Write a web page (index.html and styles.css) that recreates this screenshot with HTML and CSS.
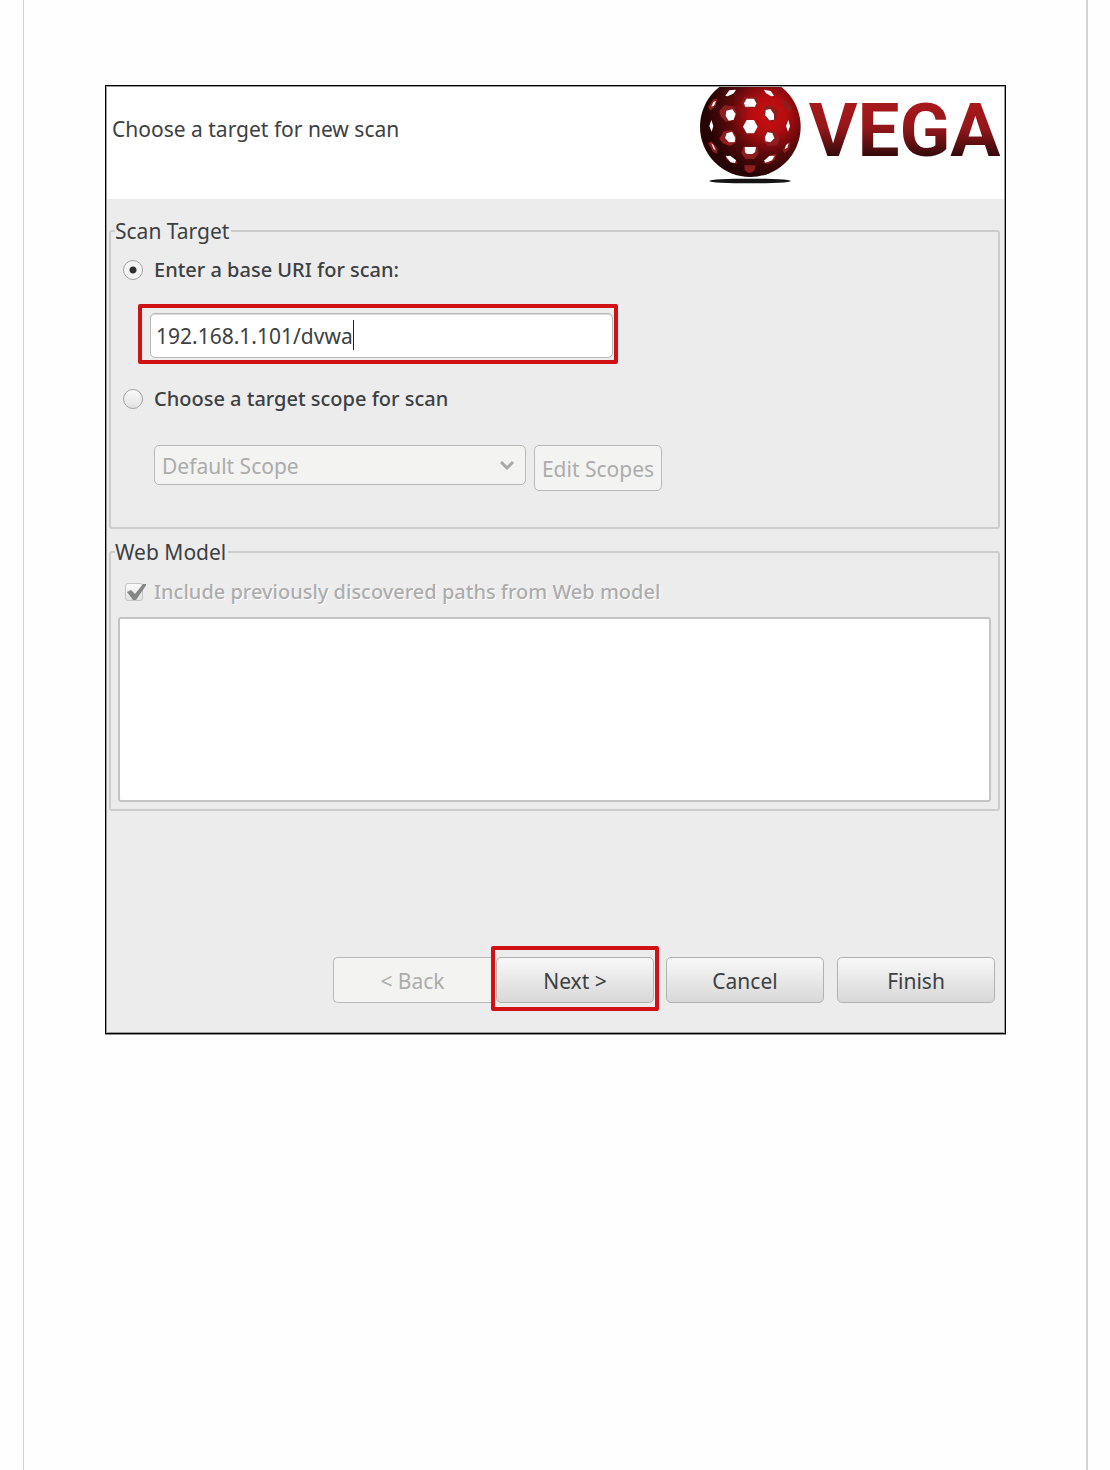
FILE: index.html
```html
<!DOCTYPE html>
<html lang="en">
<head>
<meta charset="utf-8">
<title>Vega – New scan</title>
<link rel="stylesheet" href="styles.css">
</head>
<body>
<main class="page">
  <form class="dialog">
    <header class="dialog-header">
      <h1 class="dialog-title">Choose a target for new scan</h1>
      <svg class="logo" viewBox="24 21 912 291" role="img" aria-label="Vega">
        <defs>
          <radialGradient id="ball" gradientUnits="userSpaceOnUse" cx="235" cy="105" r="185">
            <stop offset="0" stop-color="#cc0d10"/>
            <stop offset=".3" stop-color="#b30d10"/>
            <stop offset=".65" stop-color="#57090a"/>
            <stop offset="1" stop-color="#260304"/>
          </radialGradient>
          <linearGradient id="word" gradientUnits="userSpaceOnUse" x1="0" y1="57" x2="0" y2="233">
            <stop offset="0" stop-color="#ad191c"/>
            <stop offset=".5" stop-color="#921619"/>
            <stop offset="1" stop-color="#2f090b"/>
          </linearGradient>
        </defs>
        <ellipse cx="180" cy="303" rx="122" ry="7" fill="#151515"/>
        <circle cx="181" cy="140" r="151" fill="url(#ball)"/>
        <g fill="#8e1d1f">
          <path d="M163 50l36 0 6 20-8 14-34 0-8-14z"/>
          <path d="M88 93l16-17 26 3 10 16-8 26-24 4-16-16z"/>
          <path d="M222 80l20-6 20 18 2 22-14 12-22-6-8-22z"/>
          <path d="M88 176l14-23 24-3 12 18 0 20-18 10-22-8z"/>
          <path d="M222 168l10-18 24 6 14 18-10 22-26 2-12-12z"/>
          <path d="M160 200l42 0 4 20-12 17-28 0-12-17z"/>
          <path d="M163 256l34 0-3 15-10 7-10 0-10-7z"/>
          <path d="M108 225l30 14 4 12-18-2-16-12z"/>
          <path d="M220 248l18-22 22-4-6 18-20 12z"/>
          <path d="M54 82l16-24 12-2-4 20-16 16z"/>
          <path d="M276 60l14 2 16 24-4 8-18-10z"/>
          <path d="M54 190l10-6 16 18 2 20-12-6z"/>
          <path d="M278 210l14-22 10-2-4 20-14 14z"/>
        </g>
        <g fill="#fff">
          <path d="M170 120l22 0 11 20-11 20-22 0-11-20z"/>
          <path d="M170 56l22 0 7 14-4 10-29 0-4-10z"/>
          <path d="M109 92l18-4 10 14-6 17-15 3-9-14z"/>
          <path d="M227 90l14-3 11 16 0 16-14 2-12-15z"/>
          <path d="M110 160l16-5 10 19-2 12-17 1-12-13z"/>
          <path d="M232 157l15 2 6 16-12 12-14-3-2-13z"/>
          <path d="M164 201l34 0-3 16-8 5-16 0-6-5z"/>
          <path d="M106 47l12-16 20-2-8 12-18 8z"/>
          <path d="M222 29l20 4 10 14-8 2-16-9z"/>
          <path d="M107 229l14-2 17 14-3 8-13-2z"/>
          <path d="M222 242l16-14 16-1-8 14-19 7z"/>
          <path d="M64 120l6 18-5 17-7-17z"/>
          <path d="M295 120l5 18-6 17-6-17z"/>
          <path d="M64 80l6-14 8-3-6 14z"/>
          <path d="M64 190l6 5 7 16-6-4z"/>
          <path d="M284 207l5-13 7-4-4 13z"/>
        </g>
        <text class="logo-word" x="356" y="228" fill="url(#word)">VEGA</text>
      </svg>
    </header>

    <div class="dialog-body">
      <fieldset class="group group-target">
        <legend>Scan Target</legend>
        <label class="option"><input class="radio" type="radio" name="target" checked>Enter a base URI for scan:</label>
        <div class="highlight highlight-uri">
          <input class="uri" type="text" value="192.168.1.101/dvwa" aria-label="Base URI">
          <span class="caret"></span>
        </div>
        <label class="option"><input class="radio" type="radio" name="target">Choose a target scope for scan</label>
        <div class="scope-row">
          <div class="select-wrap">
            <select class="scope" aria-label="Target scope" disabled><option>Default Scope</option></select>
            <svg class="chevron" viewBox="0 0 14 10" aria-hidden="true"><path d="M1 2l6 6 6-6" fill="none" stroke="#a9a9a9" stroke-width="3"/></svg>
          </div>
          <button class="button edit" type="button" disabled>Edit Scopes</button>
        </div>
      </fieldset>

      <fieldset class="group group-model">
        <legend>Web Model</legend>
        <label class="option option-disabled">
          <span class="check-wrap">
            <input class="check" type="checkbox" checked disabled>
            <svg class="tick" viewBox="0 0 20 18" aria-hidden="true"><path d="M1 9l4-2 4 4 8-10 4 0-11 16-3 0z" fill="#858786"/></svg>
          </span>Include previously discovered paths from Web model</label>
        <textarea class="paths" aria-label="Discovered paths"></textarea>
      </fieldset>

      <footer class="actions">
        <button class="button action back" type="button" disabled>&lt; Back</button>
        <div class="highlight highlight-next"><button class="button action" type="button">Next &gt;</button></div>
        <div class="closing">
          <button class="button action" type="button">Cancel</button>
          <button class="button action" type="button">Finish</button>
        </div>
      </footer>
    </div>
  </form>
</main>
</body>
</html>
```
FILE: styles.css
```css
* { box-sizing: border-box; }

body {
  margin: 0;
  background: #fefefe;
  color: #3c4042;
  font: 400 21px/28px "Noto Sans", "Open Sans", sans-serif;
}

.page {
  min-height: 100vh;
  margin: 0 22px 0 23px;
  padding: 85px 80px 85px 81px;
  border-left: 1px solid #d4d4d4;
  border-right: 2px solid #d4d4d4;
}

.dialog {
  border: 1px solid #000;
  background: #ececec;
  box-shadow: inset 0 0 0 1px #9a9a9a, 0 1px 0 #8c8c8c;
}

.dialog-header {
  display: flex;
  justify-content: space-between;
  height: 112px;
  margin: 1px 1px 0;
  padding: 0 2px 0 5px;
  background: #fff;
}

.dialog-title {
  margin: 28px 0 0;
  font-size: 21px;
  font-weight: 400;
}

.logo { width: 304px; height: 97px; }

.logo-word {
  font-family: Roboto, sans-serif;
  font-size: 224px;
  font-weight: 700;
}

.dialog-body { padding: 18px 5px 22px 3px; }

.group {
  min-width: 0;
  margin: 0 0 9px;
  padding: 11px 7px 36px;
  border: 2px solid #cccccc;
  border-radius: 3px;
}

.group-model { padding: 12px 7px 7px; }

legend {
  margin-left: -3px;
  padding: 0 2px 0 0;
}

.option {
  display: flex;
  align-items: center;
  gap: 11px;
  padding-left: 5px;
  font-size: 20px;
  font-weight: 500;
}

.option-disabled {
  color: #acacac;
  text-shadow: 1px 1px 0 #fff;
}

.radio, .check {
  appearance: none;
  width: 20px;
  height: 20px;
  margin: 0;
  border: 1px solid #a4a4a4;
  border-radius: 50%;
  background: linear-gradient(#fafafa, #e2e2e2);
}

.radio:checked { background: radial-gradient(circle, #303030 3px, #f4f4f4 4px); }

.check-wrap {
  position: relative;
  display: flex;
  width: 20px;
}

.check {
  width: 18px;
  height: 18px;
  margin-left: 2px;
  border-color: #c4c4c4;
  border-radius: 3px;
}

.tick {
  position: absolute;
  top: 0;
  left: 3px;
  width: 20px;
  height: 18px;
}

.highlight {
  border: 4px solid #d01214;
  border-radius: 2px;
}

.highlight-uri {
  position: relative;
  width: 480px;
  margin: 20px 0 21px 20px;
  padding: 5px 1px 2px 8px;
}

.uri {
  display: block;
  width: 100%;
  height: 45px;
  padding: 0 5px;
  border: 1px solid #b8b8b8;
  border-radius: 5px;
  background: #fff;
  box-shadow: inset 0 1px 0 #dcdcdc;
  color: inherit;
  font: inherit;
}

.caret {
  position: absolute;
  top: 12px;
  left: 211px;
  width: 1px;
  height: 30px;
  background: #222;
}

.scope-row {
  display: flex;
  align-items: flex-start;
  gap: 8px;
  margin: 32px 0 0 36px;
}

.select-wrap {
  position: relative;
  width: 372px;
}

.scope {
  appearance: none;
  display: block;
  width: 100%;
  height: 40px;
  padding: 2px 7px 0;
  border: 1px solid #b9bab8;
  border-radius: 5px;
  background: #f3f3f2;
  color: #acacac;
  font: inherit;
  opacity: 1;
}

.chevron {
  position: absolute;
  top: 15px;
  right: 12px;
  width: 14px;
  height: 10px;
}

.button {
  height: 46px;
  padding: 2px 0 0;
  border: 1px solid #b2b2b2;
  border-radius: 5px;
  background: linear-gradient(#f8f8f8, #d8d8d8);
  color: inherit;
  font: inherit;
}

.button:disabled {
  border-color: #b9bab8;
  background: #f3f3f2;
  color: #acacac;
}

.edit { width: 128px; }

.paths {
  display: block;
  width: 100%;
  height: 185px;
  margin-top: 11px;
  border: 2px solid #c4c4c4;
  border-radius: 3px;
  background: #fff;
  font: inherit;
  resize: none;
}

.actions {
  display: flex;
  justify-content: flex-end;
  align-items: flex-end;
  margin-top: 135px;
  padding-right: 5px;
}

.action { width: 158px; }

.back {
  margin-bottom: 8px;
  border-right: 0;
  border-radius: 5px 0 0 5px;
}

.highlight-next {
  padding: 7px 1px 4px;
}

.highlight-next .button { display: block; }

.closing {
  display: flex;
  gap: 13px;
  margin: 0 0 8px 7px;
}
```
